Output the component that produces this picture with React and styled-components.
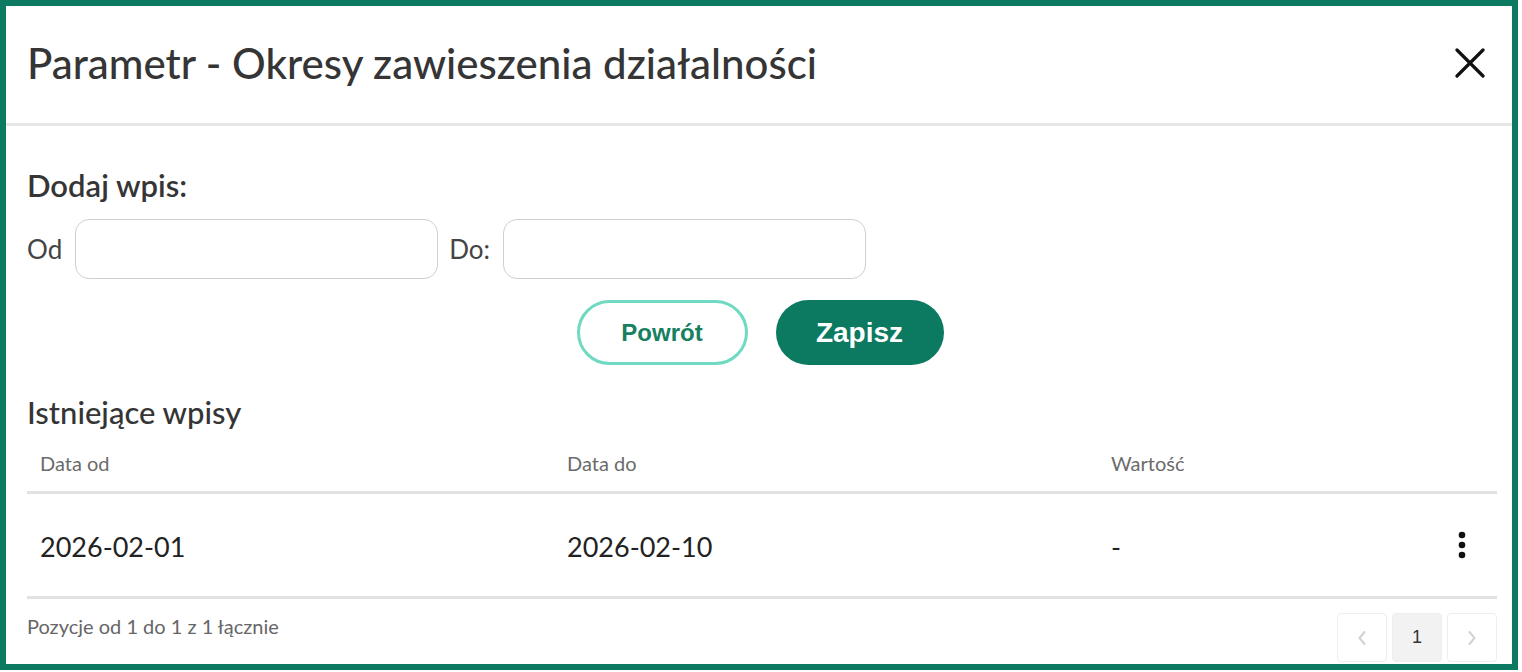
import React from "react";
import styled, { createGlobalStyle } from "styled-components";

const Global = createGlobalStyle`
  html, body { margin: 0; padding: 0; background: #fff; }
  body { font-family: Lato, "Noto Sans", sans-serif; color: #333; }
  * { box-sizing: border-box; }
`;

const Frame = styled.div`
  width: 1518px;
  height: 670px;
  border: 6px solid #0b7a60;
  background: #fff;
  display: flex;
  flex-direction: column;
  overflow: hidden;
`;

const Header = styled.header`
  height: 120px;
  flex-shrink: 0;
  display: flex;
  align-items: center;
  justify-content: space-between;
  padding: 0 22px 4px 21px;
  border-bottom: 3px solid #e6e6e6;
`;

const Title = styled.h1`
  margin: 0;
  font-family: Lato, sans-serif;
  font-weight: 500;
  font-size: 42px;
  color: #353535;
`;

const CloseBtn = styled.button`
  width: 40px;
  height: 40px;
  border: 0;
  background: transparent;
  padding: 0;
  display: flex;
  align-items: center;
  justify-content: center;
  cursor: pointer;
`;

const Body = styled.main`
  flex: 1;
  display: flex;
  flex-direction: column;
  padding: 40px 15px 0 21px;
`;

const SectionTitle = styled.h2`
  margin: 0;
  font-family: Lato, sans-serif;
  font-weight: ${(p) => p.$weight || 600};
  font-size: ${(p) => p.$size || 31}px;
  color: #353535;
`;

const FieldRow = styled.div`
  display: flex;
  align-items: center;
  margin-top: 15px;
`;

const FieldLabel = styled.label`
  font-family: Lato, sans-serif;
  font-size: 26px;
  color: #444;
  margin-right: 13px;
  margin-left: ${(p) => p.$ml || 0}px;
`;

const DateInput = styled.input`
  width: 363px;
  height: 60px;
  border: 1px solid #cfcfcf;
  border-radius: 14px;
  background: #fff;
  outline: none;
  font-size: 20px;
`;

const Actions = styled.div`
  display: flex;
  justify-content: center;
  gap: 28px;
  margin-top: 21px;
  padding-right: 4px;
`;

const Button = styled.button`
  height: 65px;
  width: ${(p) => p.$w}px;
  border-radius: 33px;
  font-family: "Liberation Sans", Arial, sans-serif;
  font-weight: 700;
  cursor: pointer;
  ${(p) =>
    p.$primary
      ? `background:#0b7a60;color:#fff;border:0;font-size:28px;`
      : `background:#fff;color:#17805f;border:3px solid #6fd9c1;font-size:24px;`}
`;

const TableSection = styled.section`
  margin-top: 28px;
`;

const Grid = styled.div`
  display: grid;
  grid-template-columns: 527px 544px 1fr 60px;
  align-items: center;
  border-bottom: 3px solid #e2e2e2;
  height: ${(p) => p.$h}px;
`;

const HeadCell = styled.div`
  padding-left: 13px;
  font-family: Lato, sans-serif;
  font-size: 20px;
  color: #6b6b6b;
  padding-top: 4px;
`;

const Cell = styled.div`
  padding-left: 13px;
  padding-top: 2px;
  font-family: Lato, sans-serif;
  font-size: 27px;
  color: #222;
`;

const MenuCell = styled.div`
  display: flex;
  justify-content: center;
  padding-right: 10px;
`;

const Footer = styled.div`
  display: flex;
  align-items: flex-start;
  justify-content: space-between;
  margin-top: 14px;
`;

const Info = styled.div`
  font-family: Lato, sans-serif;
  font-size: 20px;
  color: #666;
  margin-top: 1px;
`;

const Pager = styled.div`
  display: flex;
  gap: 5px;
`;

const PageBtn = styled.button`
  width: 50px;
  height: 49px;
  border: 1px solid #eeeeee;
  border-radius: 4px;
  background: ${(p) => (p.$active ? "#f2f2f2" : "#fff")};
  font-family: "Liberation Sans", Arial, sans-serif;
  font-size: 18px;
  color: #333;
  display: flex;
  align-items: center;
  justify-content: center;
  padding: 0;
`;

const Chevron = ({ dir }) => (
  <svg width="10" height="16" viewBox="0 0 10 16">
    <path
      d={dir === "left" ? "M7.5 2 L2.5 8 L7.5 14" : "M2.5 2 L7.5 8 L2.5 14"}
      fill="none"
      stroke="#d2d2d2"
      strokeWidth="2"
      strokeLinecap="round"
      strokeLinejoin="round"
    />
  </svg>
);

const rows = [{ from: "2026-02-01", to: "2026-02-10", value: "-" }];

export default function App() {
  return (
    <>
      <Global />
      <Frame>
        <Header>
          <Title>Parametr - Okresy zawieszenia działalności</Title>
          <CloseBtn aria-label="Zamknij">
            <svg width="30" height="30" viewBox="0 0 30 30">
              <path d="M2 2 L28 28 M28 2 L2 28" stroke="#111" strokeWidth="3.2" strokeLinecap="round" />
            </svg>
          </CloseBtn>
        </Header>
        <Body>
          <SectionTitle>Dodaj wpis:</SectionTitle>
          <FieldRow>
            <FieldLabel>Od</FieldLabel>
            <DateInput />
            <FieldLabel $ml={11}>Do:</FieldLabel>
            <DateInput />
          </FieldRow>
          <Actions>
            <Button $w={171}>Powrót</Button>
            <Button $w={168} $primary>Zapisz</Button>
          </Actions>
          <TableSection>
            <SectionTitle $weight={500} $size={31}>Istniejące wpisy</SectionTitle>
            <Grid $h={63}>
              <HeadCell>Data od</HeadCell>
              <HeadCell>Data do</HeadCell>
              <HeadCell>Wartość</HeadCell>
              <div />
            </Grid>
            {rows.map((r) => (
              <Grid key={r.from} $h={105}>
                <Cell>{r.from}</Cell>
                <Cell>{r.to}</Cell>
                <Cell>{r.value}</Cell>
                <MenuCell>
                  <svg width="10" height="28" viewBox="0 0 10 28">
                    <circle cx="5" cy="4" r="3.3" fill="#111" />
                    <circle cx="5" cy="14" r="3.3" fill="#111" />
                    <circle cx="5" cy="24" r="3.3" fill="#111" />
                  </svg>
                </MenuCell>
              </Grid>
            ))}
            <Footer>
              <Info>Pozycje od 1 do 1 z 1 łącznie</Info>
              <Pager>
                <PageBtn aria-label="Poprzednia"><Chevron dir="left" /></PageBtn>
                <PageBtn $active>1</PageBtn>
                <PageBtn aria-label="Następna"><Chevron dir="right" /></PageBtn>
              </Pager>
            </Footer>
          </TableSection>
        </Body>
      </Frame>
    </>
  );
}
